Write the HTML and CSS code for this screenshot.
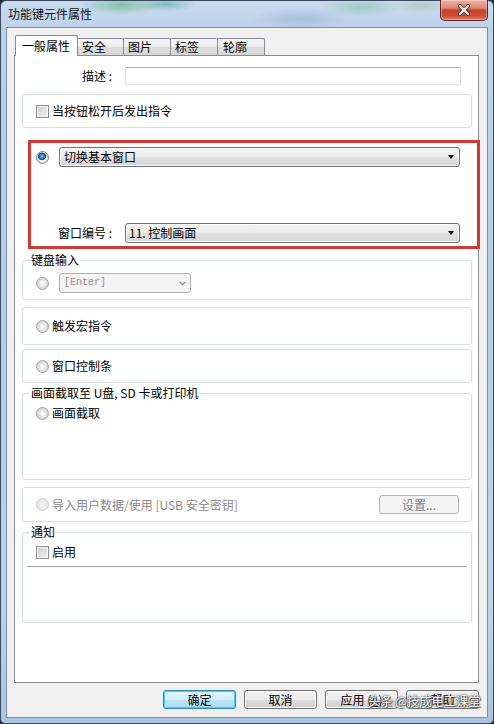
FILE: index.html
```html
<!DOCTYPE html>
<html>
<head>
<meta charset="utf-8">
<link rel="stylesheet" href="styles.css">
</head>
<body>
<div class="window">
  <div class="titlebar">
    <span class="title">功能键元件属性</span>
    <div class="close">
      <svg width="14" height="12" viewBox="0 0 14 12">
        <path d="M3 2 L11 10 M11 2 L3 10" stroke="#5a2a20" stroke-width="4" stroke-linecap="round"/>
        <path d="M3 2 L11 10 M11 2 L3 10" stroke="#ffffff" stroke-width="2.2" stroke-linecap="round"/>
      </svg>
    </div>
  </div>
  <div class="client">
    <div class="tabs">
      <div class="tab active">一般属性</div>
      <div class="tab t2">安全</div>
      <div class="tab t3">图片</div>
      <div class="tab t4">标签</div>
      <div class="tab t5">轮廓</div>
    </div>
    <div class="panel">
      <div class="desc-row">
        <span class="desc-label">描述 :</span>
        <div class="input"></div>
      </div>

      <div class="group g1">
        <span class="cb"></span><span class="txt">当按钮松开后发出指令</span>
      </div>

      <div class="redbox">
        <div class="rb-row1">
          <span class="radio on"></span>
          <div class="combo c-wide"><span class="ctext">切换基本窗口</span><span class="arrow"></span></div>
        </div>
        <div class="rb-row2">
          <span class="win-label">窗口编号 :</span>
          <div class="combo c-num"><span class="ctext">11. 控制画面</span><span class="arrow"></span></div>
        </div>
      </div>

      <div class="group g-kbd">
        <span class="gtitle">键盘输入</span>
        <div class="kbd-row">
          <span class="radio"></span>
          <div class="combo disabled c-enter"><span class="ctext mono">[Enter]</span>
            <svg class="chev" width="7" height="5" viewBox="0 0 7 5"><path d="M0.5 0.8 L3.5 3.8 L6.5 0.8" fill="none" stroke="#9a9a9a" stroke-width="1.3"/></svg>
          </div>
        </div>
      </div>

      <div class="group g-macro">
        <span class="radio"></span><span class="txt">触发宏指令</span>
      </div>

      <div class="group g-bar">
        <span class="radio"></span><span class="txt">窗口控制条</span>
      </div>

      <div class="group g-shot">
        <span class="gtitle">画面截取至 U盘, SD 卡或打印机</span>
        <div class="opt-row"><span class="radio"></span><span class="txt">画面截取</span></div>
      </div>

      <div class="group g-usb">
        <span class="radio dis"></span><span class="txt gray">导入用户数据/使用 [USB 安全密钥]</span>
        <div class="btn-dis">设置...</div>
      </div>

      <div class="group g-notify">
        <span class="gtitle">通知</span>
        <div class="opt-row"><span class="cb"></span><span class="txt">启用</span></div>
        <div class="sep"></div>
      </div>
    </div>
    <div class="buttons">
      <div class="btn default">确定</div>
      <div class="btn">取消</div>
      <div class="btn">应用 (<u>A</u>)</div>
      <div class="btn">帮助</div>
    </div>
  </div>
  <div class="watermark">头条 @技成电工课堂</div>
</div>
</body>
</html>
```

FILE: styles.css
```css
* { box-sizing: border-box; }
html, body { margin: 0; padding: 0; }
body {
  width: 494px;
  height: 724px;
  overflow: hidden;
  background: #1f2b38;
  font-family: "Noto Sans CJK SC", "Noto Sans", sans-serif;
  font-size: 12px;
  color: #000;
}

.window {
  position: relative;
  width: 494px;
  height: 724px;
  display: flex;
  flex-direction: column;
  border: 1px solid #3a4b60;
  border-radius: 6px 6px 5px 5px;
  background:
    radial-gradient(ellipse 40px 10px at 120px 4px, rgba(80,170,110,0.55), transparent),
    radial-gradient(ellipse 30px 8px at 165px 3px, rgba(40,150,140,0.45), transparent),
    radial-gradient(ellipse 50px 12px at 300px 18px, rgba(120,150,190,0.35), transparent),
    radial-gradient(ellipse 40px 10px at 360px 6px, rgba(90,170,120,0.35), transparent),
    radial-gradient(ellipse 30px 8px at 420px 4px, rgba(150,170,120,0.35), transparent),
    linear-gradient(180deg, #c9dcef 0px, #bcd2ea 30px, #b3cbe6 300px, #bdd3ea 600px, #aac4e0 724px);
}

.titlebar {
  height: 26px;
  display: flex;
  align-items: flex-start;
}
.title {
  padding-left: 7px;
  line-height: 26px;
  font-size: 12px;
  color: #111;
}
.close {
  margin-left: auto;
  margin-right: 5px;
  margin-top: -1px;
  width: 48px;
  height: 21px;
  border: 1px solid #5b2118;
  border-top: none;
  border-radius: 0 0 5px 5px;
  background: linear-gradient(180deg, #eab0a2 0%, #dc8a77 40%, #c4432c 50%, #c84a30 75%, #db7a62 100%);
  box-shadow: inset 0 0 0 1px rgba(255,220,210,0.5);
  display: flex;
  align-items: center;
  justify-content: center;
}

.client {
  margin: 0 5px;
  height: 691px;
  border: 1px solid #7d90a8;
  background: #f0f0f0;
  display: flex;
  flex-direction: column;
}

.tabs {
  position: relative;
  z-index: 1;
  display: flex;
  align-items: flex-end;
  height: 20px;
  margin-top: 7px;
  padding-left: 8px;
}
.tab {
  height: 17px;
  border: 1px solid #898c95;
  border-bottom: none;
  border-radius: 2px 2px 0 0;
  background: linear-gradient(180deg, #f6f6f6 0%, #ececec 50%, #dedede 51%, #d6d6d6 100%);
  line-height: 15px;
  padding-left: 4px;
  margin-left: -1px;
}
.tab.active {
  height: 21px;
  margin-bottom: -1px;
  margin-left: 0;
  width: 63px;
  background: #fff;
  padding-left: 6px;
  line-height: 19px;
  font-size: 12px;
  z-index: 2;
  position: relative;
}
.t2 { width: 47px; margin-left: -1px; }
.t3 { width: 48px; }
.t4 { width: 48px; }
.t5 { width: 48px; padding-left: 5px; }

.panel {
  margin-left: 7px;
  width: 465px;
  height: 628px;
  border: 1px solid #898c95;
  background: #fff;
  display: flex;
  flex-direction: column;
}

.desc-row {
  display: flex;
  align-items: center;
  margin-top: 11px;
  height: 18px;
  padding-left: 67px;
}
.desc-label {
  width: 43px;
  line-height: 16px;
}
.input {
  width: 336px;
  height: 18px;
  border: 1px solid #dbdfe6;
  border-top-color: #abadb3;
  border-radius: 2px;
  background: #fff;
}

.group {
  margin-left: 7px;
  width: 450px;
  border: 1px solid #d5dfe5;
  border-radius: 3px;
  display: flex;
  align-items: center;
  padding-left: 13px;
}
.group .gtitle {
  align-self: flex-start;
  margin-top: -9px;
  margin-left: -6px;
  line-height: 16px;
  height: 16px;
  background: #fff;
  padding: 0 1px;
}
.g1 { margin-top: 9px; height: 34px; }
.g-kbd { margin-top: 11px; height: 40px; flex-direction: column; align-items: flex-start; }
.g-macro { margin-top: 7px; height: 38px; }
.g-bar { margin-top: 4px; height: 34px; }
.g-shot { margin-top: 10px; height: 87px; flex-direction: column; align-items: flex-start; }
.g-usb { margin-top: 7px; height: 35px; padding-right: 12px; }
.g-notify { margin-top: 10px; height: 91px; flex-direction: column; align-items: flex-start; padding-left: 13px; }

.txt { margin-left: 3px; line-height: 16px; }
.txt.gray { color: #8a8a8a; }

.kbd-row {
  display: flex;
  align-items: center;
  margin-top: 5px;
  height: 20px;
}
.opt-row {
  display: flex;
  align-items: center;
  margin-top: 4px;
  height: 16px;
}

.sep {
  align-self: stretch;
  margin: 6px 4px 0 -9px;
  height: 2px;
  border-top: 1px solid #a0a0a0;
  border-bottom: 1px solid #ffffff;
}

/* radio / checkbox */
.radio {
  flex: none;
  width: 13px;
  height: 13px;
  border-radius: 50%;
  border: 1px solid #a2a2a2;
  background: radial-gradient(circle at 50% 50%, #ffffff 0px, #f2f2f2 2px, #d6d6d6 5px, #e9e9e9 6px);
}
.radio.on {
  border-color: #7e8a96;
  background: radial-gradient(circle at 45% 40%, #b8e0ff 0px, #3c8ad0 1.5px, #1b5d9c 3.2px, #174f86 3.7px, #ffffff 4.2px, #f0f0f0 5px, #dcdcdc 6px);
}
.radio.dis {
  border-color: #c9c9c9;
  background: radial-gradient(circle, #f6f6f6 0px, #e6e6e6 5px, #efefef 6px);
}
.cb {
  flex: none;
  width: 13px;
  height: 13px;
  border: 1px solid #8f8f8f;
  background: linear-gradient(135deg, #c6c9cd 0%, #e2e3e5 55%, #f4f4f4 100%);
  box-shadow: inset 0 0 0 1px #f5f5f5;
}

/* red highlight */
.redbox {
  margin-top: 12px;
  margin-left: 13px;
  width: 452px;
  height: 109px;
  border: 3px solid #d33a36;
  display: flex;
  flex-direction: column;
}
.rb-row1 {
  display: flex;
  align-items: center;
  margin-top: 4px;
  padding-left: 5px;
  height: 20px;
}
.rb-row1 .combo { margin-left: 10px; }
.rb-row2 {
  display: flex;
  align-items: center;
  margin-top: 56px;
  padding-left: 27px;
  height: 20px;
}
.win-label { width: 67px; line-height: 16px; }

.combo {
  height: 20px;
  border: 1px solid #707070;
  border-radius: 3px;
  background: linear-gradient(180deg, #f4f4f4 0%, #ececec 45%, #e0e0e0 55%, #d6d6d6 100%);
  box-shadow: inset 0 0 0 1px #fafafa;
  display: flex;
  align-items: center;
  padding-left: 4px;
}
.ctext { line-height: 16px; }
.c-wide { width: 401px; }
.c-num { width: 335px; padding-left: 3px; }
.arrow {
  margin-left: auto;
  margin-right: 5px;
  width: 0;
  height: 0;
  border-left: 3.5px solid transparent;
  border-right: 3.5px solid transparent;
  border-top: 4px solid #000;
}
.combo.disabled {
  margin-left: 10px;
  width: 132px;
  border-color: #adb2b5;
  background: #f4f4f4;
  box-shadow: none;
  color: #8d8d8d;
}
.mono { font-family: "Liberation Mono", monospace; font-size: 10px; }
.chev { margin-left: auto; margin-right: 4px; }

.btn-dis {
  margin-left: auto;
  width: 80px;
  height: 19px;
  border: 1px solid #adb2b5;
  border-radius: 3px;
  background: #f4f4f4;
  color: #838383;
  text-align: center;
  line-height: 17px;
}

/* bottom buttons */
.buttons {
  display: flex;
  justify-content: flex-end;
  gap: 8px;
  margin-top: 7px;
  padding-right: 8px;
}
.btn {
  width: 73px;
  height: 19px;
  border: 1px solid #707070;
  border-radius: 3px;
  background: linear-gradient(180deg, #f2f2f2 0%, #ebebeb 50%, #dddddd 51%, #cfcfcf 100%);
  box-shadow: inset 0 0 0 1px #fbfbfb;
  text-align: center;
  line-height: 17px;
}
.btn u { text-decoration: underline; }
.btn.default {
  border-color: #2f8fb8;
  background: linear-gradient(180deg, #e6f5fd 0%, #d4eefb 50%, #bfe5f8 51%, #a9dcf4 100%);
  box-shadow: inset 0 0 0 1px #48c8e6, 0 0 1px #5fd0ee;
}

.watermark {
  position: absolute;
  left: 367px;
  top: 691px;
  font-size: 12.5px;
  line-height: 18px;
  color: #ffffff;
  text-shadow: 0 0 1px #333, 0 0 2px #444, 1px 1px 1px #555;
  letter-spacing: -0.2px;
}
```
